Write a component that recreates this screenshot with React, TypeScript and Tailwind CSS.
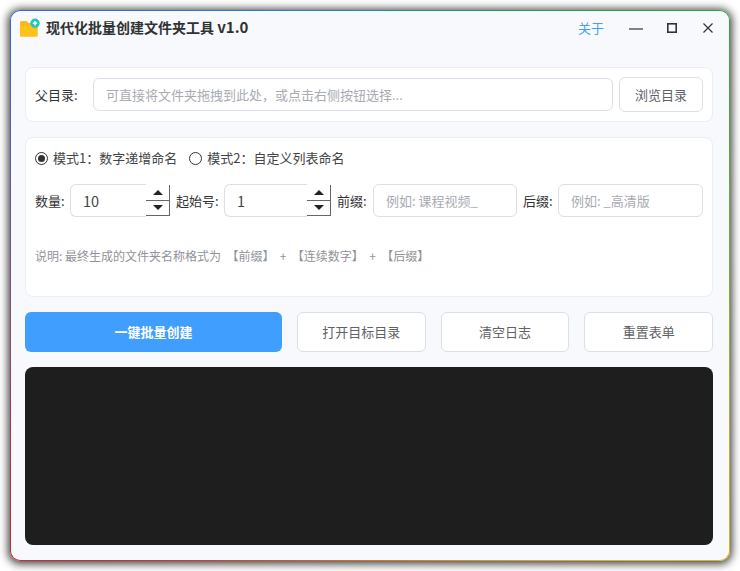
const font = { fontFamily: '"Noto Sans CJK SC", "Liberation Sans", sans-serif' };

const FolderIcon = () => (
  <svg width="20" height="20" viewBox="0 0 20 20" className="shrink-0">
    <path d="M0 4.5 A1.5 1.5 0 0 1 1.5 3 H6.5 L8.5 5 H16 A1.5 1.5 0 0 1 17.5 6.5 V17.5 A1 1 0 0 1 16.5 18.5 H1 A1 1 0 0 1 0 17.5 Z" fill="#f9b91c" />
    <path d="M0 7.5 H17.5 V17.5 A1 1 0 0 1 16.5 18.5 H1 A1 1 0 0 1 0 17.5 Z" fill="#fcc419" />
    <circle cx="15" cy="5.2" r="4.7" fill="#20c7b8" />
    <path d="M15 3 V7.4 M12.8 5.2 H17.2" stroke="#fff" strokeWidth="1.4" />
  </svg>
);

const SpinBox = ({ value, width }: { value: string; width: string }) => (
  <div className={`flex h-[33px] items-start ${width}`}>
    <div className="flex h-[33px] flex-1 items-center rounded-l-md border-y border-l border-[#dcdfe6] bg-white">
      <span className="pl-3 text-[14.5px] text-[#444]">{value}</span>
    </div>
    <div className="mt-px flex h-[31px] w-[24px] flex-col border-r border-b border-[#666] bg-white">
      <div className="flex flex-1 items-center justify-center">
        <div className="h-0 w-0 border-x-[5px] border-b-[5px] border-x-transparent border-b-[#222]" />
      </div>
      <div className="h-px bg-[#666]" />
      <div className="flex flex-1 items-center justify-center">
        <div className="h-0 w-0 border-x-[5px] border-t-[5px] border-x-transparent border-t-[#222]" />
      </div>
    </div>
  </div>
);

const Field = ({ placeholder, width }: { placeholder: string; width: string }) => (
  <div className={`flex h-[33px] items-center rounded-md border border-[#dcdfe6] bg-white pl-3 text-[13px] text-[#a8abb2] ${width}`}>
    {placeholder}
  </div>
);

const Radio = ({ checked, label }: { checked?: boolean; label: string }) => (
  <div className="flex items-center gap-[5px]">
    <div className="flex h-[13px] w-[13px] items-center justify-center rounded-full border border-[#333] bg-white">
      {checked && <div className="h-[7px] w-[7px] rounded-full bg-[#333]" />}
    </div>
    <span className="text-[13px] text-[#444]">{label}</span>
  </div>
);

const ActionButton = ({ label }: { label: string }) => (
  <button className="h-[40px] flex-1 rounded-md border border-[#dcdfe6] bg-white text-[13px] text-[#606266]">
    {label}
  </button>
);

export default function App() {
  return (
    <div className="h-[571px] w-[740px] bg-white p-[10px]" style={font}>
      <div className="h-[551px] w-[720px] rounded-[10px] bg-[conic-gradient(from_315deg,#2f6fd6_0deg,#22a84a_90deg,#e8b810_180deg,#d02a2a_270deg,#2f6fd6_360deg)] p-px shadow-[0_1px_9px_2px_rgba(0,0,0,0.75)]">
        <div className="flex h-full flex-col rounded-[9px] bg-[#f7f9fc] pl-[14px] pr-[16px]">
          {/* Title bar */}
          <div className="flex h-[35px] shrink-0 items-center pb-[2px]">
            <div className="-ml-[5px] flex items-center gap-[6px]">
              <FolderIcon />
              <span className="text-[14px] font-bold text-[#303133]">
                现代化批量创建文件夹工具 <span className="text-[15px]">v1.0</span>
              </span>
            </div>
            <span className="ml-auto text-[13px] text-[#409eff]">关于</span>
            <div className="ml-[25px] flex items-center">
              <svg width="14" height="10" viewBox="0 0 14 10"><path d="M0 6 H14" stroke="#333" strokeWidth="1.2" /></svg>
              <svg width="10" height="10" viewBox="0 0 10 10" className="ml-[24px]"><rect x="0.8" y="0.8" width="8.4" height="8.4" fill="none" stroke="#333" strokeWidth="1.6" /></svg>
              <svg width="10" height="10" viewBox="0 0 10 10" className="ml-[26px]"><path d="M0.5 0.5 L9.5 9.5 M9.5 0.5 L0.5 9.5" stroke="#333" strokeWidth="1.2" /></svg>
            </div>
          </div>

          {/* Parent dir */}
          <div className="mt-[21px] flex h-[55px] shrink-0 items-center rounded-lg border border-[#ebeef5] bg-white pl-[9px] pr-[9px]">
            <span className="w-[58px] shrink-0 text-[13px] text-[#333]">父目录:</span>
            <div className="flex h-[33px] w-[520px] items-center rounded-md border border-[#dcdfe6] pl-3 text-[13px] text-[#a8abb2]">
              可直接将文件夹拖拽到此处，或点击右侧按钮选择...
            </div>
            <button className="ml-[6px] h-[35px] w-[84px] rounded-md border border-[#dcdfe6] bg-white text-[13px] text-[#606266]">
              浏览目录
            </button>
          </div>

          {/* Mode card */}
          <div className="mt-[15px] h-[160px] shrink-0 rounded-lg border border-[#ebeef5] bg-white px-[9px]">
            <div className="mt-[10px] flex h-[20px] items-center gap-[12px]">
              <Radio checked label="模式1：数字递增命名" />
              <Radio label="模式2：自定义列表命名" />
            </div>
            <div className="mt-[16px] flex items-center text-[13px] text-[#333]">
              <span className="w-[35px] shrink-0">数量:</span>
              <SpinBox value="10" width="w-[100px]" />
              <span className="ml-[6px] w-[48px] shrink-0">起始号:</span>
              <SpinBox value="1" width="w-[107px]" />
              <span className="ml-[6px] w-[36px] shrink-0">前缀:</span>
              <Field placeholder="例如: 课程视频_" width="w-[144px]" />
              <span className="ml-[6px] w-[35px] shrink-0">后缀:</span>
              <Field placeholder="例如: _高清版" width="w-[145px]" />
            </div>
            <p className="mt-[30px] whitespace-pre text-[12px] leading-[18px] text-[#909399]">
              {"说明: 最终生成的文件夹名称格式为  【前缀】  +  【连续数字】  +  【后缀】"}
            </p>
          </div>

          {/* Actions */}
          <div className="mt-[15px] flex shrink-0 gap-[15px]">
            <button className="h-[40px] w-[257px] shrink-0 rounded-md bg-[#409eff] text-[13px] font-bold text-white">
              一键批量创建
            </button>
            <ActionButton label="打开目标目录" />
            <ActionButton label="清空日志" />
            <ActionButton label="重置表单" />
          </div>

          {/* Log */}
          <div className="mt-[15px] h-[178px] shrink-0 rounded-lg bg-[#1e1e1e]" />
        </div>
      </div>
    </div>
  );
}
